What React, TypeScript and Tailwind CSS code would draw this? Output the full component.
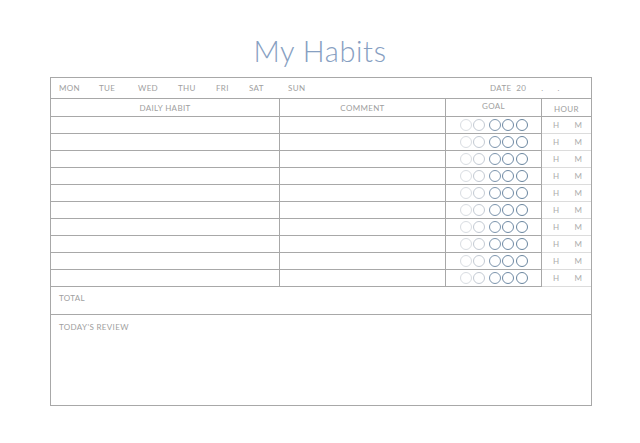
const days = [
  { label: "MON", w: "w-[40px]" },
  { label: "TUE", w: "w-[39px]" },
  { label: "WED", w: "w-[40px]" },
  { label: "THU", w: "w-[38px]" },
  { label: "FRI", w: "w-[33px]" },
  { label: "SAT", w: "w-[39px]" },
  { label: "SUN", w: "w-[39px]" },
];

function Circles() {
  return (
    <div className="flex items-center justify-center gap-[1.5px]">
      <span className="w-[12px] h-[12px] rounded-full border border-[#d9dde2]" />
      <span className="w-[12px] h-[12px] rounded-full border border-[#c3cad3] mr-[2px]" />
      <span className="w-[12px] h-[12px] rounded-full border-[1.3px] border-[#7d95ad]" />
      <span className="w-[12px] h-[12px] rounded-full border-[1.3px] border-[#6f8aa5]" />
      <span className="w-[12px] h-[12px] rounded-full border-[1.3px] border-[#6a869f]" />
    </div>
  );
}

export default function App() {
  const rows = Array.from({ length: 10 });
  return (
    <div className="w-[640px] h-[443px] bg-white font-['Lato',sans-serif] text-[#a0a0a0]">
      {/* Title */}
      <div className="h-[77px] flex items-end justify-center pb-[12px]">
        <h1 className="text-[29px] font-light leading-none text-[#87a0c2] tracking-[0.6px]">
          My Habits
        </h1>
      </div>

      <div className="ml-[50px] w-[542px] border border-[#a8a8a8] text-[8px] tracking-[0.35px]">
        {/* Days + date */}
        <div className="h-[21px] flex items-center pl-[8px] border-b border-[#a8a8a8]">
          {days.map((d) => (
            <span key={d.label} className={d.w}>
              {d.label}
            </span>
          ))}
          <span className="ml-auto w-[101px] flex">
            <span>DATE&nbsp;&nbsp;20</span>
            <span className="ml-[15px]">.</span>
            <span className="ml-[14px]">.</span>
          </span>
        </div>

        {/* Table */}
        <div className="grid grid-cols-[229px_166px_96px_1fr]">
          <div className="h-[18px] flex items-center justify-center border-b border-r border-[#a8a8a8]">
            DAILY HABIT
          </div>
          <div className="h-[18px] flex items-center justify-center border-b border-r border-[#a8a8a8]">
            COMMENT
          </div>
          <div className="h-[18px] flex items-start justify-center pt-[1px] border-b border-r border-[#a8a8a8]">
            GOAL
          </div>
          <div className="h-[18px] flex items-center justify-center pt-[2px] border-b border-[#a8a8a8]">
            HOUR
          </div>
          {rows.map((_, i) => (
            <div key={i} className="contents">
              <div className="h-[17px] border-b border-r border-[#a8a8a8]" />
              <div className="h-[17px] border-b border-r border-[#a8a8a8]" />
              <div className="h-[17px] flex items-center justify-center border-b border-r border-[#a8a8a8]">
                <Circles />
              </div>
              <div className="h-[17px] flex items-center pl-[11px] gap-[15px] border-b border-[#dcdcdc] text-[#acacac]">
                <span>H</span>
                <span>M</span>
              </div>
            </div>
          ))}
        </div>

        {/* Total */}
        <div className="h-[28px] pl-[8px] pt-[5px] border-b border-[#a8a8a8]">TOTAL</div>

        {/* Review */}
        <div className="h-[90px] pl-[8px] pt-[6px]">TODAY'S REVIEW</div>
      </div>
    </div>
  );
}
